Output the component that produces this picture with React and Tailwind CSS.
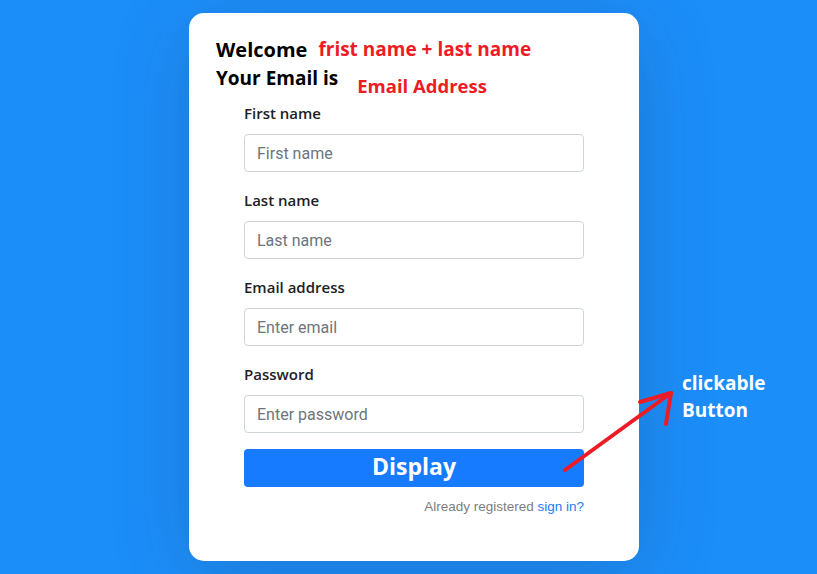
import React from 'react';

const fields = [
  {label: 'First name', placeholder: 'First name', type: 'text'},
  {label: 'Last name', placeholder: 'Last name', type: 'text'},
  {label: 'Email address', placeholder: 'Enter email', type: 'email'},
  {label: 'Password', placeholder: 'Enter password', type: 'password'},
];

const App = () => {
  return (
    <div className="relative flex h-[574px] justify-center overflow-hidden bg-[#1c8ef9] pl-[11px] pt-[13px] font-['Open_Sans',sans-serif]">
      {/* CARD */}

      <div className="h-[548px] w-[450px] rounded-[15px] bg-white px-[55px] pt-[23px] shadow-[0px_14px_80px_rgba(34,35,58,0.2)]">
        <div className="-ml-[28px] font-bold">
          <div className="flex h-[28px] items-center leading-[28px]">
            <span className="text-[20px] text-black">Welcome</span>
            <span className="ml-[11px] -mt-[3px] text-[19px] text-[#ed1c24]">
              frist name + last name
            </span>
          </div>
          <div className="flex h-[28px] items-start leading-[28px]">
            <span className="text-[19px] text-black">Your Email is</span>
            <span className="ml-[19px] mt-[8px] text-[18.5px] text-[#ed1c24]">
              Email Address
            </span>
          </div>
        </div>

        <form className="mt-[9px]" onSubmit={(e) => e.preventDefault()}>
          {fields.map((f) => (
            <div key={f.label} className="mb-[16px]">
              <label className="mb-[9px] block h-[24px] text-[15px] font-semibold leading-[24px] text-[#1d2125]">
                {f.label}
              </label>
              <input
                type={f.type}
                placeholder={f.placeholder}
                className="block h-[38px] w-full rounded-[4px] border border-[#ced4da] px-[12px] font-['Roboto',sans-serif] text-[16px] text-[#495057] placeholder:text-[#6c757d] focus:outline-none"
              />
            </div>
          ))}

          <button
            type="submit"
            className="block h-[38px] w-full rounded-[4px] bg-[#167bff] pb-[3px] text-[23px] font-bold leading-[35px] text-white"
          >
            Display
          </button>

          <p className="mt-[10px] text-right font-['Liberation_Sans',sans-serif] text-[13.5px] leading-[20px] text-[#7f7d7d]">
            Already registered <a href="#" className="text-[#167bff]">sign in?</a>
          </p>
        </form>
      </div>

      {/* ANNOTATION */}

      <svg
        className="pointer-events-none absolute left-0 top-0"
        width="817"
        height="574"
        viewBox="0 0 817 574"
      >
        <g stroke="#ed1c24" strokeWidth="4" strokeLinecap="round" fill="none">
          <path d="M565 470 L671 393" />
          <path d="M640 402 L671 393" />
          <path d="M666 424 L671 393" />
        </g>
      </svg>

      <div className="absolute left-[682px] top-[370px] text-[19px] font-bold leading-[27px] text-white">
        <div>clickable</div>
        <div>Button</div>
      </div>
    </div>
  );
};

export default App;
